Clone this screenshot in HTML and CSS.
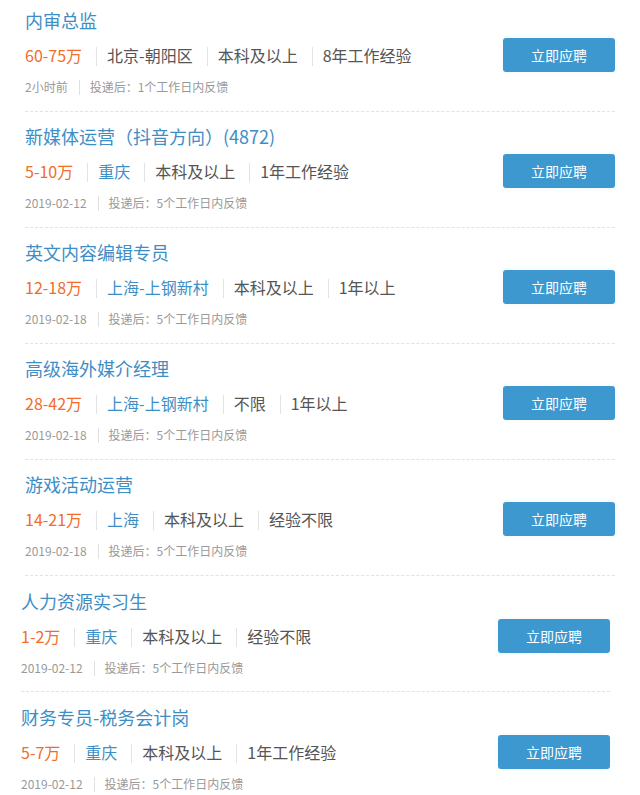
FILE: index.html
```html
<!DOCTYPE html>
<html lang="zh-CN">
<head>
  <meta charset="UTF-8">
  <meta name="viewport" content="width=device-width, initial-scale=1.0">
  <title>职位列表</title>
  <link rel="stylesheet" href="styles.css">
</head>
<body>
  <!-- 职位列表 -->
  <ul class="job-list">
    <li class="job">
      <a class="job-title" href="javascript:;">内审总监</a>
      <div class="job-tags">
        <span class="salary">60-75万</span>
        <span>北京-朝阳区</span>
        <span>本科及以上</span>
        <span>8年工作经验</span>
      </div>
      <a class="apply-btn" href="javascript:;">立即应聘</a>
      <div class="job-meta">
        <span>2小时前</span>
        <span>投递后：1个工作日内反馈</span>
      </div>
    </li>
    <li class="job">
      <a class="job-title" href="javascript:;">新媒体运营（抖音方向）(4872)</a>
      <div class="job-tags">
        <span class="salary">5-10万</span>
        <span class="city">重庆</span>
        <span>本科及以上</span>
        <span>1年工作经验</span>
      </div>
      <a class="apply-btn" href="javascript:;">立即应聘</a>
      <div class="job-meta">
        <span>2019-02-12</span>
        <span>投递后：5个工作日内反馈</span>
      </div>
    </li>
    <li class="job">
      <a class="job-title" href="javascript:;">英文内容编辑专员</a>
      <div class="job-tags">
        <span class="salary">12-18万</span>
        <span class="city">上海-上钢新村</span>
        <span>本科及以上</span>
        <span>1年以上</span>
      </div>
      <a class="apply-btn" href="javascript:;">立即应聘</a>
      <div class="job-meta">
        <span>2019-02-18</span>
        <span>投递后：5个工作日内反馈</span>
      </div>
    </li>
    <li class="job">
      <a class="job-title" href="javascript:;">高级海外媒介经理</a>
      <div class="job-tags">
        <span class="salary">28-42万</span>
        <span class="city">上海-上钢新村</span>
        <span>不限</span>
        <span>1年以上</span>
      </div>
      <a class="apply-btn" href="javascript:;">立即应聘</a>
      <div class="job-meta">
        <span>2019-02-18</span>
        <span>投递后：5个工作日内反馈</span>
      </div>
    </li>
    <li class="job">
      <a class="job-title" href="javascript:;">游戏活动运营</a>
      <div class="job-tags">
        <span class="salary">14-21万</span>
        <span class="city">上海</span>
        <span>本科及以上</span>
        <span>经验不限</span>
      </div>
      <a class="apply-btn" href="javascript:;">立即应聘</a>
      <div class="job-meta">
        <span>2019-02-18</span>
        <span>投递后：5个工作日内反馈</span>
      </div>
    </li>
  </ul>

  <!-- 第二段截图，左边偏了几个像素 -->
  <ul class="job-list job-list-b">
    <li class="job">
      <a class="job-title" href="javascript:;">人力资源实习生</a>
      <div class="job-tags">
        <span class="salary">1-2万</span>
        <span class="city">重庆</span>
        <span>本科及以上</span>
        <span>经验不限</span>
      </div>
      <a class="apply-btn" href="javascript:;">立即应聘</a>
      <div class="job-meta">
        <span>2019-02-12</span>
        <span>投递后：5个工作日内反馈</span>
      </div>
    </li>
    <li class="job">
      <a class="job-title" href="javascript:;">财务专员-税务会计岗</a>
      <div class="job-tags">
        <span class="salary">5-7万</span>
        <span class="city">重庆</span>
        <span>本科及以上</span>
        <span>1年工作经验</span>
      </div>
      <a class="apply-btn" href="javascript:;">立即应聘</a>
      <div class="job-meta">
        <span>2019-02-12</span>
        <span>投递后：5个工作日内反馈</span>
      </div>
    </li>
  </ul>
</body>
</html>
```

FILE: styles.css
```css
/* 清除默认样式 */
* {
  margin: 0;
  padding: 0;
  box-sizing: border-box;
}
body {
  background: #fff;
  font-family: "Noto Sans CJK SC", "Noto Sans", sans-serif;
  color: #555;
}
a {
  text-decoration: none;
}

/* 列表 */
.job-list {
  list-style: none;
  padding: 0 25px;
}
.job-list-b {
  padding: 0 30px 0 21px;
}

/* 每一条职位 */
.job {
  display: grid;
  grid-template-columns: 1fr 112px;
  padding: 12px 0 16px;
  border-bottom: 1px dashed #e2e2e2;
}
.job-list:first-child .job:first-child {
  padding-top: 8px;
}
.job-list-b .job {
  padding-top: 13px;
  padding-bottom: 15px;
}
.job:last-child {
  border-bottom: none;
}
.job-list:first-child .job:last-child {
  border-bottom: 1px dashed #e2e2e2;
}

.job-title {
  grid-column: 1 / 3;
  font-size: 18px;
  line-height: 24px;
  color: #3e8ec6;
  margin-bottom: 11px;
}

/* 薪资 城市 学历 经验 */
.job-tags {
  display: flex;
  align-items: center;
  height: 24px;
  font-size: 16px;
  color: #555;
}
.job-tags span + span::before {
  content: "";
  display: inline-block;
  width: 1px;
  height: 19px;
  background: #e3e3e3;
  margin: 0 10px 0 14px;
  vertical-align: -4px;
}
.job-tags .salary {
  color: #f26c2a;
}
.job-tags .city {
  color: #3e8ec6;
}

/* 应聘按钮 */
.apply-btn {
  grid-row: 2;
  grid-column: 2;
  align-self: center;
  height: 34px;
  margin: -5px 0;
  line-height: 34px;
  text-align: center;
  font-size: 14px;
  color: #fff;
  background: #3c98cf;
  border-radius: 3px;
  box-shadow: 0 0 6px rgba(60, 152, 207, 0.08);
}

/* 时间 反馈 */
.job-meta {
  grid-column: 1 / 3;
  display: flex;
  align-items: center;
  margin-top: 10px;
  height: 18px;
  font-size: 12px;
  color: #999;
}
.job-meta span + span::before {
  content: "";
  display: inline-block;
  width: 1px;
  height: 15px;
  background: #e0e0e0;
  margin: 0 10px 0 11px;
  vertical-align: -3px;
}
```
